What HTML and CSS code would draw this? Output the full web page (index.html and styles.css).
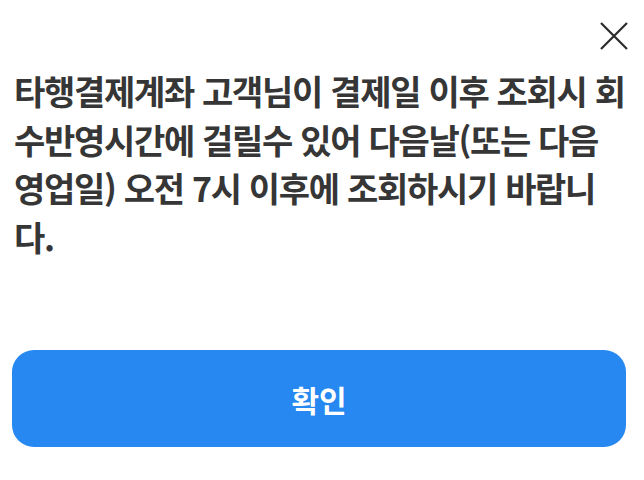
FILE: index.html
```html
<!DOCTYPE html>
<html lang="ko">
<head>
<meta charset="utf-8">
<link rel="stylesheet" href="styles.css">
</head>
<body>
<div class="dialog">
  <div class="top">
    <button class="close" aria-label="닫기">
      <svg width="30" height="30" viewBox="0 0 30 30"><path d="M2 2 L28 28 M28 2 L2 28" stroke="#2b2b2b" stroke-width="2.2" fill="none"/></svg>
    </button>
  </div>
  <p class="msg">타행결제계좌 고객님이 결제일 이후 조회시 회<br>수반영시간에 걸릴수 있어 다음날(또는 다음<br>영업일) 오전 7시 이후에 조회하시기 바랍니<br>다.</p>
  <button class="ok">확인</button>
</div>
</body>
</html>
```
FILE: styles.css
```css
html, body { margin: 0; padding: 0; background: #fff; }
body { width: 644px; height: 480px; overflow: hidden; font-family: "Noto Sans CJK KR", "Noto Sans", sans-serif; }
.dialog { display: flex; flex-direction: column; padding: 0 14px 0 14px; }
.top { display: flex; justify-content: flex-end; padding-top: 21px; height: 46px; box-sizing: border-box; padding-right: 1px; }
.close { border: 0; background: none; padding: 0; width: 30px; height: 30px; cursor: pointer; }
.close svg { display: block; }
.msg { margin: 0; font-size: 34px; line-height: 48.5px; font-weight: 700; color: #363636; letter-spacing: -1.3px; word-break: break-all; margin-top: 21px; }
.ok { margin: 89px 4px 0 -2px; height: 97px; border: 0; border-radius: 22px; background: #2688f0; color: #fff; font-family: inherit; font-size: 30px; font-weight: 700; }
```
